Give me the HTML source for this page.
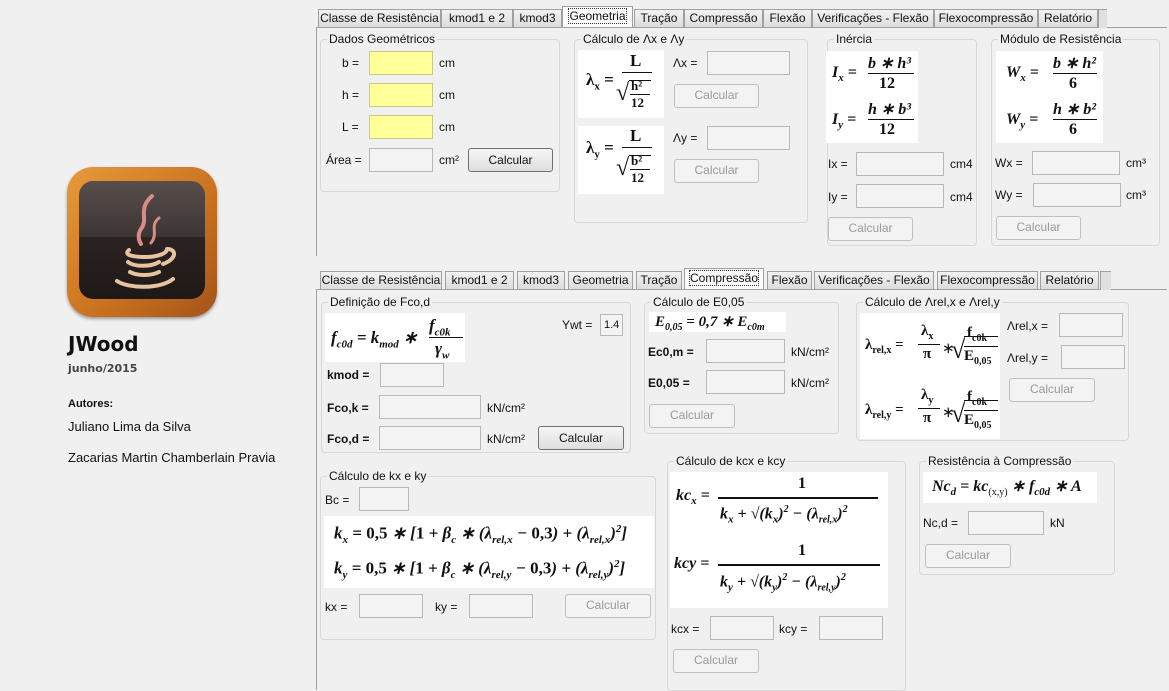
<!DOCTYPE html>
<html><head><meta charset="utf-8"><style>
body{margin:0;width:1169px;height:684px;background:#f0f0f0;position:relative;overflow:hidden;font-family:"Liberation Sans",sans-serif;font-size:12px;color:#111}
.a{position:absolute}
.t{position:absolute;white-space:nowrap;font-size:12px;line-height:14px}
.in{position:absolute;height:21px;border:1px solid #b8b8b8;background:#f3f3f3;box-sizing:border-box}
.y{background:#ffff99;border-color:#c9c98a}
.btn{position:absolute;height:23px;border:1px solid #707070;border-radius:3px;background:linear-gradient(#f6f6f6,#dedede);box-sizing:border-box;text-align:center;line-height:21px;font-size:12px}
.dis{border-color:#c0c0c0;background:#f3f3f3;color:#9a9a9a}
.g{position:absolute;border:1px solid #d8d8d8;border-radius:4px;box-sizing:border-box}
.gl{position:absolute;top:-8px;left:6px;background:#f0f0f0;padding:0 2px;font-size:12px;line-height:14px;white-space:nowrap}
.f{position:absolute;background:#fff;font-family:"Liberation Serif",serif;font-weight:bold;font-style:italic;color:#111;white-space:nowrap;overflow:hidden}
.up{font-style:normal}
.tab{position:absolute;height:18px;border:1px solid #a0a0a0;border-bottom:none;background:linear-gradient(#f2f2f2,#dcdcdc);box-sizing:border-box;font-size:12px;line-height:17px;text-align:center;white-space:nowrap}
.sel{background:#fafafa;height:21px;line-height:18px}
.sel span{outline:1px dotted #333}
.b{font-weight:bold}
.ln{position:absolute;border-top:1.5px solid #111}
</style></head><body>

<!-- left logo -->
<div class="a" style="left:67px;top:167px;width:150px;height:150px;border-radius:26px;background:linear-gradient(135deg,#e79a3a,#c8701e 60%,#a4541a);box-shadow:0 2px 3px #999"></div>
<div class="a" style="left:79px;top:181px;width:126px;height:118px;border-radius:14px;background:linear-gradient(#4a3f3d,#2b2322 50%,#1e1817);"></div>
<div class="a" style="left:79px;top:181px;width:126px;height:56px;border-radius:14px 14px 0 0;background:rgba(255,255,255,0.08)"></div>
<svg class="a" style="left:79px;top:181px" width="126" height="118" viewBox="0 0 126 118">
<path d="M73 15 C58 28 70 38 62 48 C58 54 60 60 62 63" stroke="#d98c86" stroke-width="4" fill="none" stroke-linecap="round"/>
<path d="M80 37 C70 45 80 52 72 62" stroke="#d98c86" stroke-width="3" fill="none" stroke-linecap="round"/>
<path d="M50 69 C44 74 54 76 66 76 C80 76 88 72 88 68 M88 68 C98 68 98 78 84 83" stroke="#e8c3a0" stroke-width="4" fill="none" stroke-linecap="round"/>
<path d="M49 81 C55 86 72 86 80 81" stroke="#e8c3a0" stroke-width="4" fill="none" stroke-linecap="round"/>
<path d="M51 91 C58 95 72 95 80 91" stroke="#e8c3a0" stroke-width="4" fill="none" stroke-linecap="round"/>
<path d="M38 100 C50 108 82 108 94 98" stroke="#e8c3a0" stroke-width="4" fill="none" stroke-linecap="round"/>
</svg>
<div class="t b" style="left:68px;top:333px;font-size:20px;line-height:22px;font-family:'DejaVu Sans',sans-serif">JWood</div>
<div class="t b" style="left:68px;top:362px;font-size:11px;color:#444;font-family:'DejaVu Sans',sans-serif">junho/2015</div>
<div class="t b" style="left:68px;top:397px;font-size:11px">Autores:</div>
<div class="t" style="left:68px;top:420px;font-size:13px">Juliano Lima da Silva</div>
<div class="t" style="left:68px;top:451px;font-size:13px">Zacarias Martin Chamberlain Pravia</div>

<!-- ===== TOP WINDOW ===== -->
<div class="a" style="left:316px;top:27px;width:850px;height:228px;border-left:1px solid #a0a0a0;border-top:1px solid #a0a0a0"></div>
<div class="tab" style="left:318px;top:9px;width:123px">Classe de Resistência</div>
<div class="tab" style="left:441px;top:9px;width:72px">kmod1 e 2</div>
<div class="tab" style="left:513px;top:9px;width:49px">kmod3</div>
<div class="tab sel" style="left:562px;top:6px;width:71px"><span>Geometria</span></div>
<div class="tab" style="left:634px;top:9px;width:50px">Tração</div>
<div class="tab" style="left:684px;top:9px;width:79px">Compressão</div>
<div class="tab" style="left:763px;top:9px;width:49px">Flexão</div>
<div class="tab" style="left:812px;top:9px;width:122px">Verificações - Flexão</div>
<div class="tab" style="left:934px;top:9px;width:104px">Flexocompressão</div>
<div class="tab" style="left:1038px;top:9px;width:60px">Relatório</div>
<div class="a" style="left:1098px;top:9px;width:8px;height:18px;border:1px solid #a0a0a0;border-bottom:none;border-right:none;background:#e0e0e0"></div>

<div class="g" style="left:320px;top:39px;width:240px;height:153px"><div class="gl">Dados Geométricos</div></div>
<div class="t" style="left:342px;top:56px">b =</div><div class="in y" style="left:369px;top:51px;width:64px;height:24px"></div><div class="t" style="left:439px;top:56px">cm</div>
<div class="t" style="left:342px;top:88px">h =</div><div class="in y" style="left:369px;top:83px;width:64px;height:24px"></div><div class="t" style="left:439px;top:88px">cm</div>
<div class="t" style="left:342px;top:120px">L =</div><div class="in y" style="left:369px;top:115px;width:64px;height:24px"></div><div class="t" style="left:439px;top:120px">cm</div>
<div class="t" style="left:326px;top:153px">Área =</div><div class="in" style="left:369px;top:148px;width:64px;height:24px"></div><div class="t" style="left:439px;top:153px">cm²</div>
<div class="btn" style="left:468px;top:148px;width:85px;height:24px;line-height:22px">Calcular</div>

<div class="g" style="left:574px;top:39px;width:234px;height:184px"><div class="gl">Cálculo de Λx e Λy</div></div>
<div class="f" style="left:578px;top:50px;width:86px;height:68px;font-size:17px;font-style:normal">
<span class="a" style="left:8px;top:20px">λ<sub style="font-size:11px">x</sub> =</span>
<span class="a" style="left:52px;top:1px">L</span><span class="ln" style="left:44px;top:22px;width:30px"></span>
<span class="a" style="left:38px;top:28px;font-size:24px;font-weight:normal;line-height:30px">√</span>
<span class="ln" style="left:51px;top:30px;width:22px;border-top-width:1px"></span>
<span class="a" style="left:53px;top:29px;font-size:13px;line-height:14px">h²</span>
<span class="ln" style="left:52px;top:44px;width:20px;border-top-width:1px"></span>
<span class="a" style="left:53px;top:46px;font-size:13px;line-height:14px">12</span></div>
<div class="t" style="left:673px;top:56px">Λx =</div><div class="in" style="left:707px;top:51px;width:83px;height:24px"></div>
<div class="btn dis" style="left:674px;top:84px;width:85px;height:24px">Calcular</div>
<div class="f" style="left:578px;top:126px;width:86px;height:68px;font-size:17px;font-style:normal">
<span class="a" style="left:8px;top:12px">λ<sub style="font-size:11px">y</sub> =</span>
<span class="a" style="left:52px;top:0px">L</span><span class="ln" style="left:44px;top:21px;width:30px"></span>
<span class="a" style="left:38px;top:27px;font-size:24px;font-weight:normal;line-height:30px">√</span>
<span class="ln" style="left:51px;top:29px;width:22px;border-top-width:1px"></span>
<span class="a" style="left:53px;top:28px;font-size:13px;line-height:14px">b²</span>
<span class="ln" style="left:52px;top:43px;width:20px;border-top-width:1px"></span>
<span class="a" style="left:53px;top:45px;font-size:13px;line-height:14px">12</span></div>
<div class="t" style="left:673px;top:131px">Λy =</div><div class="in" style="left:707px;top:126px;width:83px;height:24px"></div>
<div class="btn dis" style="left:674px;top:159px;width:85px;height:24px">Calcular</div>

<div class="g" style="left:827px;top:39px;width:150px;height:207px"><div class="gl">Inércia</div></div>
<div class="f" style="left:826px;top:51px;width:92px;height:92px;font-size:16px">
<span class="a" style="left:6px;top:13px">I<sub style="font-size:11px">x</sub> =</span><span class="a" style="left:42px;top:2px">b ∗ h³</span><span class="ln" style="left:42px;top:22px;width:46px"></span><span class="a" style="left:53px;top:24px;font-style:normal">12</span>
<span class="a" style="left:6px;top:60px">I<sub style="font-size:11px">y</sub> =</span><span class="a" style="left:42px;top:48px">h ∗ b³</span><span class="ln" style="left:42px;top:68px;width:46px"></span><span class="a" style="left:53px;top:70px;font-style:normal">12</span></div>
<div class="t" style="left:828px;top:157px">Ix =</div><div class="in" style="left:856px;top:152px;width:88px;height:24px"></div><div class="t" style="left:950px;top:157px">cm4</div>
<div class="t" style="left:828px;top:190px">Iy =</div><div class="in" style="left:856px;top:184px;width:88px;height:24px"></div><div class="t" style="left:950px;top:190px">cm4</div>
<div class="btn dis" style="left:828px;top:217px;width:85px;height:24px">Calcular</div>

<div class="g" style="left:991px;top:39px;width:169px;height:207px"><div class="gl">Módulo de Resistência</div></div>
<div class="f" style="left:996px;top:51px;width:107px;height:92px;font-size:16px">
<span class="a" style="left:10px;top:13px">W<sub style="font-size:11px">x</sub> =</span><span class="a" style="left:57px;top:2px">b ∗ h²</span><span class="ln" style="left:57px;top:22px;width:44px"></span><span class="a" style="left:73px;top:24px;font-style:normal">6</span>
<span class="a" style="left:10px;top:60px">W<sub style="font-size:11px">y</sub> =</span><span class="a" style="left:57px;top:48px">h ∗ b²</span><span class="ln" style="left:57px;top:68px;width:44px"></span><span class="a" style="left:73px;top:70px;font-style:normal">6</span></div>
<div class="t" style="left:995px;top:156px">Wx =</div><div class="in" style="left:1032px;top:151px;width:88px;height:24px"></div><div class="t" style="left:1126px;top:156px">cm³</div>
<div class="t" style="left:995px;top:188px">Wy =</div><div class="in" style="left:1033px;top:183px;width:88px;height:24px"></div><div class="t" style="left:1126px;top:188px">cm³</div>
<div class="btn dis" style="left:996px;top:216px;width:85px;height:24px">Calcular</div>

<!-- ===== BOTTOM WINDOW ===== -->
<div class="a" style="left:316px;top:289px;width:850px;height:400px;border-left:1px solid #a0a0a0;border-top:1px solid #a0a0a0"></div>
<div class="tab" style="left:320px;top:271px;width:122px">Classe de Resistência</div>
<div class="tab" style="left:445px;top:271px;width:69px">kmod1 e 2</div>
<div class="tab" style="left:517px;top:271px;width:48px">kmod3</div>
<div class="tab" style="left:568px;top:271px;width:65px">Geometria</div>
<div class="tab" style="left:636px;top:271px;width:46px">Tração</div>
<div class="tab sel" style="left:684px;top:268px;width:80px"><span>Compressão</span></div>
<div class="tab" style="left:767px;top:271px;width:45px">Flexão</div>
<div class="tab" style="left:814px;top:271px;width:120px">Verificações - Flexão</div>
<div class="tab" style="left:937px;top:271px;width:101px">Flexocompressão</div>
<div class="tab" style="left:1040px;top:271px;width:59px">Relatório</div>
<div class="a" style="left:1100px;top:271px;width:10px;height:18px;border:1px solid #a0a0a0;border-bottom:none;border-right:none;background:#e0e0e0"></div>

<div class="g" style="left:321px;top:302px;width:310px;height:151px"><div class="gl">Definição de Fco,d</div></div>
<div class="f" style="left:325px;top:313px;width:140px;height:49px;font-size:17px"><span class="a" style="left:6px;top:15px">f<sub style="font-size:11px">c0d</sub> = k<sub style="font-size:11px">mod</sub> ∗</span><span class="a" style="left:104px;top:3px">f<sub style="font-size:11px">c0k</sub></span><span class="ln" style="left:104px;top:24px;width:34px"></span><span class="a" style="left:110px;top:26px">γ<sub style="font-size:11px">w</sub></span></div>
<div class="t" style="left:562px;top:318px">Ywt =</div><div class="in" style="left:600px;top:314px;width:23px;height:22px;font-size:11px;line-height:20px;padding-left:3px">1.4</div>
<div class="t b" style="left:327px;top:368px">kmod =</div><div class="in" style="left:380px;top:363px;width:64px;height:24px"></div>
<div class="t b" style="left:327px;top:401px">Fco,k =</div><div class="in" style="left:379px;top:395px;width:102px;height:24px"></div><div class="t" style="left:487px;top:401px">kN/cm²</div>
<div class="t b" style="left:327px;top:432px">Fco,d =</div><div class="in" style="left:379px;top:426px;width:102px;height:24px"></div><div class="t" style="left:487px;top:432px">kN/cm²</div>
<div class="btn" style="left:538px;top:426px;width:86px;height:24px;line-height:22px">Calcular</div>

<div class="g" style="left:644px;top:302px;width:195px;height:132px"><div class="gl">Cálculo de E0,05</div></div>
<div class="f" style="left:649px;top:312px;width:137px;height:20px;font-size:15px;line-height:20px"><span style="padding-left:6px">E<sub style="font-size:10px">0,05</sub> = 0,7 ∗ E<sub style="font-size:10px">c0m</sub></span></div>
<div class="t b" style="left:648px;top:345px">Ec0,m =</div><div class="in" style="left:706px;top:339px;width:79px;height:24px"></div><div class="t" style="left:791px;top:345px">kN/cm²</div>
<div class="t b" style="left:648px;top:376px">E0,05 =</div><div class="in" style="left:706px;top:370px;width:79px;height:24px"></div><div class="t" style="left:791px;top:376px">kN/cm²</div>
<div class="btn dis" style="left:649px;top:404px;width:86px;height:24px">Calcular</div>

<div class="g" style="left:856px;top:302px;width:273px;height:139px"><div class="gl">Cálculo de Λrel,x e Λrel,y</div></div>
<div class="f" style="left:860px;top:313px;width:140px;height:126px;font-size:15px;font-style:normal">
<span class="a" style="left:5px;top:24px">λ<sub style="font-size:10px">rel,x</sub> =</span><span class="a" style="left:61px;top:10px">λ<sub style="font-size:10px">x</sub></span><span class="ln" style="left:58px;top:31px;width:22px"></span><span class="a" style="left:63px;top:33px">π</span><span class="a" style="left:82px;top:26px;font-weight:normal">∗</span>
<span class="a" style="left:91px;top:22px;font-size:26px;font-weight:normal;line-height:30px">√</span><span class="ln" style="left:104px;top:23px;width:34px;border-top-width:1px"></span>
<span class="a" style="left:107px;top:10px;top:12px">f<sub style="font-size:10px">c0k</sub></span><span class="ln" style="left:104px;top:33px;width:34px"></span><span class="a" style="left:104px;top:35px">E<sub style="font-size:10px">0,05</sub></span>
<span class="a" style="left:5px;top:89px">λ<sub style="font-size:10px">rel,y</sub> =</span><span class="a" style="left:61px;top:74px">λ<sub style="font-size:10px">y</sub></span><span class="ln" style="left:58px;top:95px;width:22px"></span><span class="a" style="left:63px;top:97px">π</span><span class="a" style="left:82px;top:90px;font-weight:normal">∗</span>
<span class="a" style="left:91px;top:86px;font-size:26px;font-weight:normal;line-height:30px">√</span><span class="ln" style="left:104px;top:87px;width:34px;border-top-width:1px"></span>
<span class="a" style="left:107px;top:76px">f<sub style="font-size:10px">c0k</sub></span><span class="ln" style="left:104px;top:97px;width:34px"></span><span class="a" style="left:104px;top:99px">E<sub style="font-size:10px">0,05</sub></span></div>
<div class="t" style="left:1007px;top:319px">Λrel,x =</div><div class="in" style="left:1059px;top:313px;width:64px;height:24px"></div>
<div class="t" style="left:1007px;top:351px">Λrel,y =</div><div class="in" style="left:1061px;top:345px;width:64px;height:24px"></div>
<div class="btn dis" style="left:1009px;top:378px;width:86px;height:24px">Calcular</div>

<div class="g" style="left:320px;top:476px;width:336px;height:164px"><div class="gl">Cálculo de kx e ky</div></div>
<div class="t" style="left:325px;top:493px">Bc =</div><div class="in" style="left:359px;top:487px;width:50px;height:24px"></div>
<div class="f" style="left:324px;top:516px;width:330px;height:72px;font-size:17px">
<span class="a" style="left:10px;top:7px">k<sub style="font-size:11px">x</sub> = <span class="up">0,5</span> ∗ [<span class="up">1</span> + β<sub style="font-size:11px">c</sub> ∗ (λ<sub style="font-size:11px">rel,x</sub> − <span class="up">0,3</span>) + (λ<sub style="font-size:11px">rel,x</sub>)<sup style="font-size:11px">2</sup>]</span>
<span class="a" style="left:10px;top:42px">k<sub style="font-size:11px">y</sub> = <span class="up">0,5</span> ∗ [<span class="up">1</span> + β<sub style="font-size:11px">c</sub> ∗ (λ<sub style="font-size:11px">rel,y</sub> − <span class="up">0,3</span>) + (λ<sub style="font-size:11px">rel,y</sub>)<sup style="font-size:11px">2</sup>]</span></div>
<div class="t" style="left:325px;top:600px">kx =</div><div class="in" style="left:359px;top:594px;width:64px;height:24px"></div>
<div class="t" style="left:435px;top:600px">ky =</div><div class="in" style="left:469px;top:594px;width:64px;height:24px"></div>
<div class="btn dis" style="left:565px;top:594px;width:86px;height:24px">Calcular</div>

<div class="g" style="left:667px;top:461px;width:239px;height:230px"><div class="gl">Cálculo de kcx e kcy</div></div>
<div class="f" style="left:670px;top:472px;width:218px;height:136px;font-size:16px">
<span class="a" style="left:6px;top:15px">kc<sub style="font-size:11px">x</sub> =</span><span class="a" style="left:128px;top:3px;font-style:normal">1</span><span class="a" style="left:48px;top:25px;width:160px;border-top:2px solid #111"></span><span class="a" style="left:50px;top:32px">k<sub style="font-size:11px">x</sub> + √(k<sub style="font-size:11px">x</sub>)<sup style="font-size:10px">2</sup> − (λ<sub style="font-size:10px">rel,x</sub>)<sup style="font-size:10px">2</sup></span>
<span class="a" style="left:4px;top:83px">kcy =</span><span class="a" style="left:128px;top:70px;font-style:normal">1</span><span class="a" style="left:48px;top:92px;width:162px;border-top:2px solid #111"></span><span class="a" style="left:50px;top:100px">k<sub style="font-size:11px">y</sub> + √(k<sub style="font-size:11px">y</sub>)<sup style="font-size:10px">2</sup> − (λ<sub style="font-size:10px">rel,y</sub>)<sup style="font-size:10px">2</sup></span></div>
<div class="t" style="left:671px;top:622px">kcx =</div><div class="in" style="left:710px;top:616px;width:64px;height:24px"></div>
<div class="t" style="left:779px;top:622px">kcy =</div><div class="in" style="left:819px;top:616px;width:64px;height:24px"></div>
<div class="btn dis" style="left:673px;top:649px;width:86px;height:24px">Calcular</div>

<div class="g" style="left:919px;top:461px;width:196px;height:114px"><div class="gl">Resistência à Compressão</div></div>
<div class="f" style="left:923px;top:472px;width:174px;height:31px;font-size:16px;line-height:30px"><span style="padding-left:9px">Nc<sub style="font-size:11px">d</sub> = kc<sub style="font-size:10px;font-weight:normal;font-style:normal">(x,y)</sub> ∗ f<sub style="font-size:11px">c0d</sub> ∗ A</span></div>
<div class="t" style="left:923px;top:516px">Nc,d =</div><div class="in" style="left:968px;top:511px;width:76px;height:24px"></div><div class="t" style="left:1050px;top:516px">kN</div>
<div class="btn dis" style="left:925px;top:544px;width:86px;height:24px">Calcular</div>
</body></html>
